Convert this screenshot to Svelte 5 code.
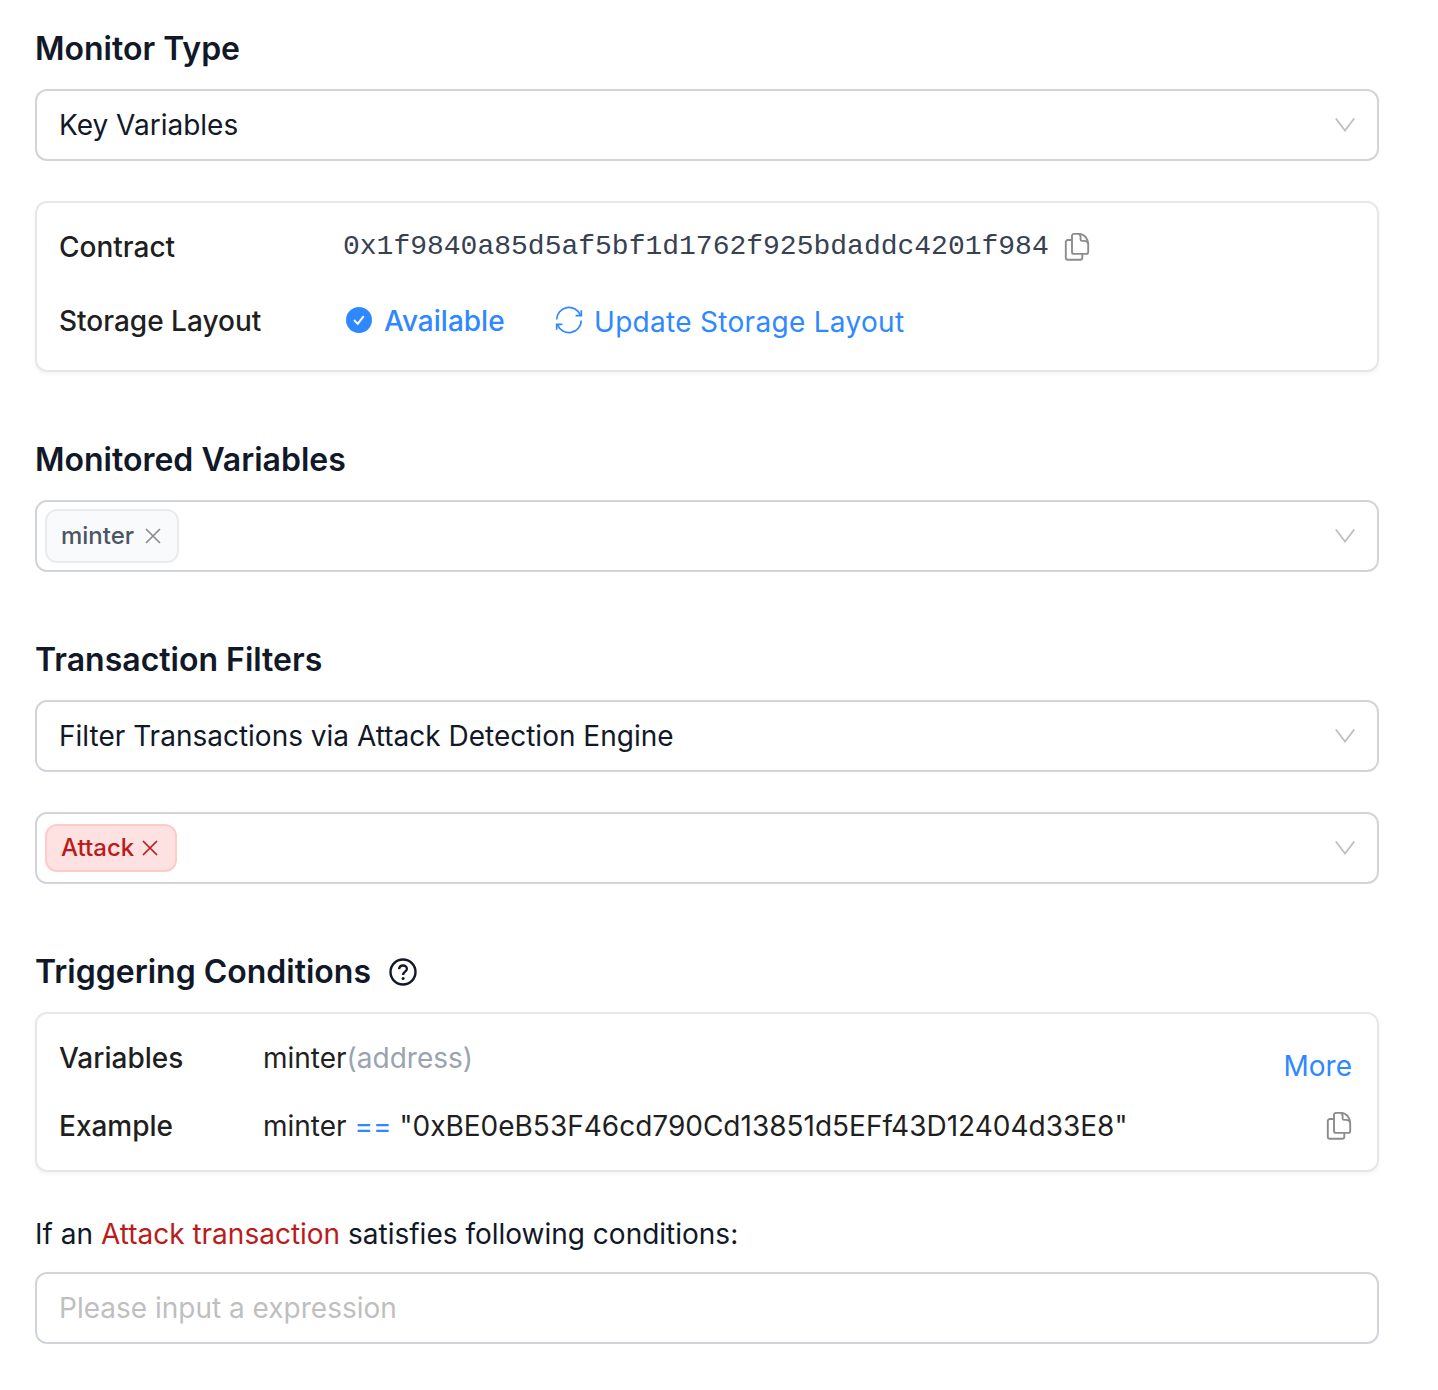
<script>
  let expression = $state('');
</script>

{#snippet chevron()}
  <svg class="chevron" viewBox="0 0 20 14" width="20" height="14" aria-hidden="true">
    <path d="M0.8 0.4L10 12.6L19.2 0.4" fill="none" stroke="currentColor" stroke-width="1.7" />
  </svg>
{/snippet}

{#snippet copyIcon()}
  <svg class="copy" viewBox="0 0 26 30" width="26" height="30" fill="none" stroke="currentColor" stroke-width="1.9" stroke-linejoin="round" aria-hidden="true">
    <path d="M8 8H3.8A2 2 0 0 0 1.8 10V25.7A2 2 0 0 0 3.8 27.7H16.3A2 2 0 0 0 18.3 25.7V21.9" />
    <path d="M10 1.9H15.2C20.5 1.9 24.2 7 24.2 12.3V19.9A2 2 0 0 1 22.2 21.9H10A2 2 0 0 1 8 19.9V3.9A2 2 0 0 1 10 1.9Z" />
    <path d="M14.8 2C16.4 2.5 16.6 3.7 16.6 5.2V7.4A1.5 1.5 0 0 0 18.1 8.9H20.2C22.5 8.9 23.7 9.9 24.1 11.4" />
  </svg>
{/snippet}

{#snippet cross()}
  <svg class="cross" viewBox="0 0 16 16" width="16" height="16" aria-hidden="true">
    <path d="M1 1L15 15M15 1L1 15" fill="none" stroke="currentColor" stroke-width="1.7" />
  </svg>
{/snippet}

<main>
  <section>
    <h2>Monitor Type</h2>
    <div class="field"><span>Key Variables</span>{@render chevron()}</div>
    <div class="card contract">
      <div class="row">
        <span class="label">Contract</span>
        <code>0x1f9840a85d5af5bf1d1762f925bdaddc4201f984</code>
        {@render copyIcon()}
      </div>
      <div class="row storage">
        <span class="label">Storage Layout</span>
        <svg class="check" viewBox="0 0 26 26" width="26" height="26" aria-hidden="true">
          <circle cx="13" cy="13" r="13" fill="currentColor" />
          <path d="M8.6 13.6L11.7 16.9L17.3 9.7" fill="none" stroke="#fff" stroke-width="2" stroke-linecap="round" stroke-linejoin="round" />
        </svg>
        <span class="available">Available</span>
        <svg class="sync" viewBox="0 0 28 28" width="28" height="28" fill="none" stroke="currentColor" stroke-width="1.7" aria-hidden="true">
          <path d="M1.7 13.5A12.3 12.3 0 0 1 25.5 9.3M26.3 14.5A12.3 12.3 0 0 1 2.5 18.7" />
          <path d="M26.3 4.2V9.7H20.6M1.7 23.8V18.3H7.4" />
        </svg>
        <span class="update">Update Storage Layout</span>
      </div>
    </div>
  </section>

  <section>
    <h2>Monitored Variables</h2>
    <div class="field tags"><span class="tag">minter{@render cross()}</span>{@render chevron()}</div>
  </section>

  <section>
    <h2>Transaction Filters</h2>
    <div class="field"><span>Filter Transactions via Attack Detection Engine</span>{@render chevron()}</div>
    <div class="field tags second"><span class="tag danger">Attack{@render cross()}</span>{@render chevron()}</div>
  </section>

  <section>
    <h2>
      Triggering Conditions
      <svg class="help" viewBox="0 0 28 28" width="28" height="28" fill="none" stroke="currentColor" aria-hidden="true">
        <circle cx="14" cy="14" r="12.5" stroke-width="2.4" />
        <path d="M10.1 11.1C10.2 8.9 11.8 7.5 14 7.5S17.9 8.9 17.9 10.9C17.9 13.6 14.1 13.8 14.1 16.9" stroke-width="2.3" />
        <circle cx="14.1" cy="20.4" r="1.5" fill="currentColor" stroke="none" />
      </svg>
    </h2>
    <div class="card conditions">
      <div class="lines">
        <div class="row"><span class="label">Variables</span><span>minter<span class="type">(address)</span></span></div>
        <div class="row"><span class="label">Example</span><span class="example">minter <span class="op">==</span> "0xBE0eB53F46cd790Cd13851d5EFf43D12404d33E8"</span></div>
      </div>
      <div class="actions"><span class="more">More</span>{@render copyIcon()}</div>
    </div>
    <p>If an <span class="attack">Attack transaction</span> satisfies following conditions:</p>
    <input class="field" placeholder="Please input a expression" bind:value={expression} />
  </section>
</main>

<style>
  :global(body) {
    margin: 0;
    background: #fff;
  }
  main {
    box-sizing: border-box;
    width: 1379px;
    padding: 25px 0 46px 35px;
    display: flex;
    flex-direction: column;
    gap: 64px;
    font: 400 28px/44px Inter, "Liberation Sans", sans-serif;
    color: #111827;
    white-space: nowrap;
  }
  svg {
    display: block;
    flex: none;
  }
  h2 {
    display: flex;
    align-items: center;
    margin: 0 0 16px;
    font-size: 32px;
    line-height: 48px;
    font-weight: 600;
  }
  .help {
    margin-left: 18px;
  }
  .field {
    box-sizing: border-box;
    display: flex;
    align-items: center;
    justify-content: space-between;
    width: 100%;
    height: 72px;
    padding: 0 22px;
    border: 2px solid #d1d5db;
    border-radius: 12px;
    background: #fff;
  }
  .tags {
    padding-left: 8px;
  }
  .second {
    margin-top: 40px;
  }
  .chevron {
    color: #bfbfbf;
  }
  .tag {
    box-sizing: border-box;
    display: flex;
    align-items: center;
    gap: 11px;
    width: 134px;
    height: 54px;
    padding-left: 14px;
    border: 2px solid #e9ebee;
    border-radius: 12px;
    background: #f9fafb;
    color: #4b5563;
    font-size: 24px;
    font-weight: 500;
  }
  .tag .cross {
    color: #8c8c8c;
  }
  .danger {
    gap: 8px;
    width: 132px;
    height: 48px;
    border-color: #fecaca;
    background: #fee2e2;
    color: #b91c1c;
  }
  .danger .cross {
    color: #b91c1c;
  }
  .card {
    box-sizing: border-box;
    border: 2px solid #e5e7eb;
    border-radius: 12px;
    box-shadow: 0 2px 4px rgba(0, 0, 0, 0.05);
    padding: 0 22px;
    color: #1f1f1f;
  }
  .row {
    display: flex;
    align-items: center;
    height: 44px;
  }
  .label {
    font-weight: 500;
  }
  .contract {
    display: flex;
    flex-direction: column;
    gap: 30px;
    height: 171px;
    margin-top: 40px;
    padding-top: 22px;
  }
  .contract .label {
    width: 284px;
  }
  code {
    font: 400 28px/44px "Liberation Mono", monospace;
    color: #374151;
    margin-right: 15px;
  }
  .copy {
    color: #8c8c8c;
  }
  .storage .check {
    margin: 0 12px 2px 3px;
  }
  .check,
  .available,
  .sync,
  .update,
  .more,
  .op {
    color: #2f88ff;
  }
  .available {
    width: 171px;
    font-weight: 500;
  }
  .sync {
    margin: 0 11px 2px 0;
  }
  .update {
    padding-top: 2px;
    letter-spacing: 0.3px;
  }
  .conditions {
    display: flex;
    justify-content: space-between;
    height: 160px;
    padding-top: 22px;
  }
  .lines {
    display: flex;
    flex-direction: column;
    gap: 24px;
  }
  .conditions .label {
    width: 204px;
  }
  .type {
    color: #9ca3af;
  }
  .actions {
    display: flex;
    flex-direction: column;
    align-items: flex-end;
    gap: 23px;
    padding: 8px 3px 0 0;
  }
  p {
    margin: 40px 0 16px;
  }
  .attack {
    color: #b91c1c;
  }
  input.field {
    font: inherit;
    color: inherit;
    outline: none;
  }
  input::placeholder {
    color: #bfbfbf;
    opacity: 1;
  }
</style>
